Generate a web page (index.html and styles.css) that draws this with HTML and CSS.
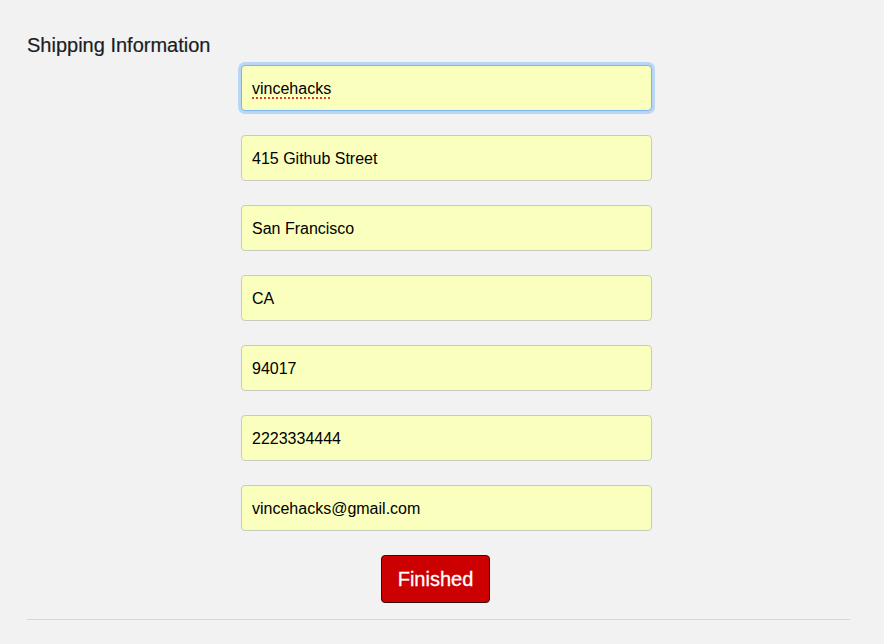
FILE: index.html
```html
<!DOCTYPE html>
<html>
<head>
<meta charset="utf-8">
<link rel="stylesheet" href="styles.css">
</head>
<body>
<div class="page">
  <h2 class="title">Shipping Information</h2>
  <div class="fields">
    <div class="field focused"><span class="misspelled">vincehacks</span></div>
    <div class="field">415 Github Street</div>
    <div class="field">San Francisco</div>
    <div class="field">CA</div>
    <div class="field">94017</div>
    <div class="field">2223334444</div>
    <div class="field">vincehacks@gmail.com</div>
  </div>
  <div class="actions">
    <button class="finish">Finished</button>
  </div>
  <hr class="rule">
</div>
</body>
</html>
```

FILE: styles.css
```css
html, body {
  margin: 0;
  padding: 0;
  background: #f2f2f2;
  font-family: "Liberation Sans", Arial, sans-serif;
  color: #111;
}
.page {
  padding: 33px 34px 0 27px;
}
.title {
  margin: 0;
  font-size: 20px;
  line-height: 24px;
  font-weight: normal;
  color: #1a1d24;
  -webkit-text-stroke: 0.2px #1a1d24;
}
.fields {
  display: flex;
  flex-direction: column;
  gap: 24px;
  margin-top: 8px;
  padding-left: 214px;
}
.field {
  box-sizing: border-box;
  width: 411px;
  height: 46px;
  border: 1px solid #c9cbc0;
  border-radius: 4px;
  background: #faffbd;
  padding: 2px 10px 0;
  display: flex;
  align-items: center;
  font-size: 16px;
  color: #000;
}
.field.focused {
  border-color: #7db2ee;
  box-shadow: 0 0 0 3px #b9d6f6;
}
.misspelled {
  text-decoration: underline dotted #e0392d;
  text-decoration-thickness: 2px;
  text-underline-offset: 3px;
}
.actions {
  margin-top: 24px;
  padding-left: 354px;
}
.finish {
  box-sizing: border-box;
  width: 109px;
  height: 48px;
  background: #cc0000;
  color: #fff;
  border: 1px solid #3a0a0a;
  border-radius: 4px;
  font-family: "Liberation Sans", Arial, sans-serif;
  font-size: 20px;
  padding: 0;
  -webkit-text-stroke: 0.3px #fff;
}
.rule {
  margin: 16px 0 0 0;
  border: none;
  border-top: 1px solid #d8d8d8;
  height: 0;
}
```
